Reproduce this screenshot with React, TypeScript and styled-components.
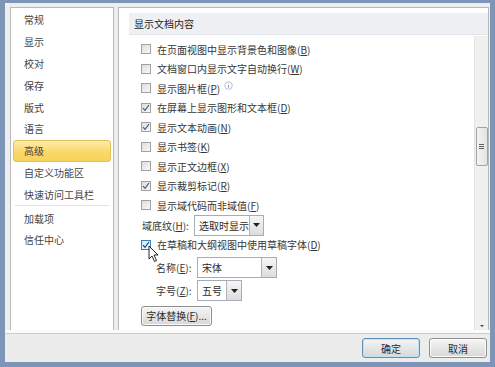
import React from 'react';
import styled, {createGlobalStyle} from 'styled-components';

const Global = createGlobalStyle`
  html, body { margin: 0; padding: 0; background: #f0f0f0; }
  body { font-family: "Noto Sans CJK SC", "Noto Sans", "Liberation Sans", sans-serif; }
  * { box-sizing: border-box; }
`;

const Window = styled.div`
  width: 495px; height: 367px;
  display: flex; flex-direction: column;
  background: #eeeeee;
  border-style: solid;
  border-color: #7d95b6;
  border-width: 3px 5px 5px 5px;
  font-size: 10px;
  color: #363636;
  overflow: hidden;
`;

const Body = styled.div`
  flex: 1;
  display: flex;
  gap: 4px;
  padding: 4px 1px 0 5px;
  min-height: 0;
`;

const Nav = styled.ul`
  width: 104px;
  margin: 0; list-style: none;
  padding: 1px 2px 0;
  background: white;
  border: 1px solid #b9b9b9;
  border-bottom: none;
`;

const NavItem = styled.li<{active?: boolean}>`
  height: 21.8px;
  display: flex; align-items: center;
  padding-left: 10px;
  color: #444;
  border-radius: 3px;
  border: 1px solid ${p => p.active ? '#e2c15c' : 'transparent'};
  background: ${p => p.active ? 'linear-gradient(#fdeaa8, #f9d867 60%, #f7d35a)' : 'none'};
`;

const NavSeparator = styled.li`
  height: 1px;
  margin: 0 2px 1px;
  background: #e2e2e2;
`;

const Panel = styled.div`
  flex: 1;
  display: flex; flex-direction: column;
  background: white;
  border: 1px solid #b9b9b9;
  border-bottom: none;
`;

const SectionHeader = styled.div`
  height: 22px;
  margin: 5px 0 0 10px;
  padding-left: 5px;
  display: flex; align-items: center;
  background: #eef0f3;
  border-bottom: 1px solid #e1e4e8;
  color: #1e1e1e;
`;

const ScrollArea = styled.div`
  flex: 1;
  display: flex;
  min-height: 0;
`;

const Content = styled.div`
  flex: 1;
  padding: 4.5px 0 0 22px;
  display: flex; flex-direction: column;
`;

const Row = styled.div<{indent?: number; top?: number; h?: number}>`
  height: ${p => p.h ?? 19.5}px;
  margin-top: ${p => p.top ?? 0}px;
  padding-left: ${p => p.indent ?? 0}px;
  display: flex; align-items: center;
  gap: 6px;
  white-space: nowrap;
`;

const Box = styled.span<{hover?: boolean}>`
  position: relative;
  width: 10px; height: 10px;
  flex: none;
  border: 1px solid ${p => p.hover ? '#3d7fb5' : '#a2a2a2'};
  background: ${p => p.hover
    ? 'linear-gradient(135deg, #cfe8f8, #f4fbff)'
    : 'linear-gradient(135deg, #dddddd, #f8f8f8)'};
  display: flex; align-items: center; justify-content: center;
`;

const Label = styled.span<{w?: number}>`
  width: ${p => p.w ? `${p.w}px` : 'auto'};
  flex: none;
`;

const Select = styled.div<{w: number}>`
  width: ${p => p.w}px; height: 21px;
  display: flex;
  border: 1px solid #a7adb6;
  background: white;
`;

const SelectText = styled.span`
  flex: 1;
  padding-left: 4px;
  display: flex; align-items: center;
  color: #2a2a2a;
`;

const DropButton = styled.span`
  width: 15px;
  border-left: 1px solid #b4b4b4;
  background: linear-gradient(#f6f6f6, #dcdcdc);
  display: flex; align-items: center; justify-content: center;
`;

const PlainButton = styled.button<{w: number; primary?: boolean}>`
  width: ${p => p.w}px; height: 20px;
  padding: 0;
  font: inherit;
  color: #2a2a2a;
  border-radius: 3px;
  border: 1px solid ${p => p.primary ? '#5f8fb8' : '#8e8e8e'};
  background: linear-gradient(#f6f6f6, #e6e6e6 50%, #d8d8d8);
  box-shadow: inset 0 0 0 1px ${p => p.primary ? '#bfe3f7' : '#fbfbfb'};
`;

const Scrollbar = styled.div`
  width: 14px;
  margin-top: 1px;
  display: flex; flex-direction: column; align-items: center;
  background: #f0f0f0;
  border-left: 1px solid #e3e3e3;
`;

const Thumb = styled.div`
  width: 12px; height: 39px;
  margin-top: 91px;
  border: 1px solid #a3a3a3;
  border-radius: 2px;
  background: linear-gradient(90deg, #f4f4f4, #e2e2e2);
  display: flex; flex-direction: column; align-items: center; justify-content: center;
  gap: 1px;
  > i { width: 5px; height: 1px; background: #606060; }
`;

const ArrowDown = styled.div`
  margin-top: auto;
  margin-bottom: 3px;
  width: 0; height: 0;
  border-left: 2px solid transparent;
  border-right: 2px solid transparent;
  border-top: 2px solid #444;
`;

const Footer = styled.div`
  height: 32px;
  display: flex; align-items: center; justify-content: flex-end;
  gap: 9px;
  padding: 1px 3px 0 0;
  border-top: 3px solid #fafafa;
  box-shadow: inset 0 1px 0 #cdcdcd;
  background: #ececec;
`;

const Cursor = styled.svg`
  position: absolute;
  left: 6px; top: 4px;
`;

function Check({checked, hover}: {checked?: boolean; hover?: boolean}) {
    return (
        <Box hover={hover}>
            {checked && (
                <svg width="8" height="8" viewBox="0 0 8 8">
                    <path d="M1 4.2 L3 6.3 L7 1" fill="none" stroke={hover ? '#173f8f' : '#4a5875'} strokeWidth="1.2"/>
                </svg>
            )}
            {hover && (
                <Cursor width="12" height="18" viewBox="0 0 12 18">
                    <path d="M1 1 L1 14 L4 11 L6.5 16.5 L8.5 15.5 L6 10 L10 10 Z" fill="white" stroke="#111" strokeWidth="0.9" strokeLinejoin="round"/>
                </Cursor>
            )}
        </Box>
    );
}

const Arrow = () => (
    <svg width="7" height="4" viewBox="0 0 7 4"><path d="M0 0 H7 L3.5 4 Z" fill="#222"/></svg>
);

const options: {text: string; key: string; checked?: boolean; help?: boolean}[] = [
    {text: '在页面视图中显示背景色和图像', key: 'B'},
    {text: '文档窗口内显示文字自动换行', key: 'W'},
    {text: '显示图片框', key: 'P', help: true},
    {text: '在屏幕上显示图形和文本框', key: 'D', checked: true},
    {text: '显示文本动画', key: 'N', checked: true},
    {text: '显示书签', key: 'K'},
    {text: '显示正文边框', key: 'X'},
    {text: '显示裁剪标记', key: 'R', checked: true},
    {text: '显示域代码而非域值', key: 'F'},
];

const navItems = ['常规', '显示', '校对', '保存', '版式', '语言', '高级', '自定义功能区', '快速访问工具栏'];

function App() {
    return (
        <>
            <Global/>
            <Window>
                <Body>
                    <Nav>
                        {navItems.map(n => <NavItem key={n} active={n === '高级'}>{n}</NavItem>)}
                        <NavSeparator/>
                        <NavItem>加载项</NavItem>
                        <NavItem>信任中心</NavItem>
                    </Nav>
                    <Panel>
                        <SectionHeader>显示文档内容</SectionHeader>
                        <ScrollArea>
                            <Content>
                                {options.map(o => (
                                    <Row key={o.key}>
                                        <Check checked={o.checked}/>
                                        <span>{o.text}(<u>{o.key}</u>)</span>
                                        {o.help && (
                                            <svg width="9" height="9" viewBox="0 0 9 9" style={{marginLeft: -2, marginTop: -6}}>
                                                <circle cx="4.5" cy="4.5" r="3.8" fill="none" stroke="#9fb3cf" strokeWidth="0.8"/>
                                                <path d="M4.5 4 V6.8 M4.5 2.3 V3" stroke="#7f98bd" strokeWidth="0.9"/>
                                            </svg>
                                        )}
                                    </Row>
                                ))}
                                <Row h={20} indent={1}>
                                    <Label w={46}>域底纹(<u>H</u>):</Label>
                                    <Select w={70}>
                                        <SelectText>选取时显示</SelectText>
                                        <DropButton><Arrow/></DropButton>
                                    </Select>
                                </Row>
                                <Row>
                                    <Check checked hover/>
                                    <span>在草稿和大纲视图中使用草稿字体(<u>D</u>)</span>
                                </Row>
                                <Row h={21} top={2.5} indent={15}>
                                    <Label w={35}>名称(<u>E</u>):</Label>
                                    <Select w={80}>
                                        <SelectText>宋体</SelectText>
                                        <DropButton><Arrow/></DropButton>
                                    </Select>
                                </Row>
                                <Row h={21} top={2} indent={15}>
                                    <Label w={35}>字号(<u>Z</u>):</Label>
                                    <Select w={45}>
                                        <SelectText>五号</SelectText>
                                        <DropButton><Arrow/></DropButton>
                                    </Select>
                                </Row>
                                <Row h={19} top={5}>
                                    <PlainButton w={71}>字体替换(<u>F</u>)...</PlainButton>
                                </Row>
                            </Content>
                            <Scrollbar>
                                <Thumb><i/><i/><i/></Thumb>
                                <ArrowDown/>
                            </Scrollbar>
                        </ScrollArea>
                    </Panel>
                </Body>
                <Footer>
                    <PlainButton w={58} primary>确定</PlainButton>
                    <PlainButton w={58}>取消</PlainButton>
                </Footer>
            </Window>
        </>
    );
}

export default App;
